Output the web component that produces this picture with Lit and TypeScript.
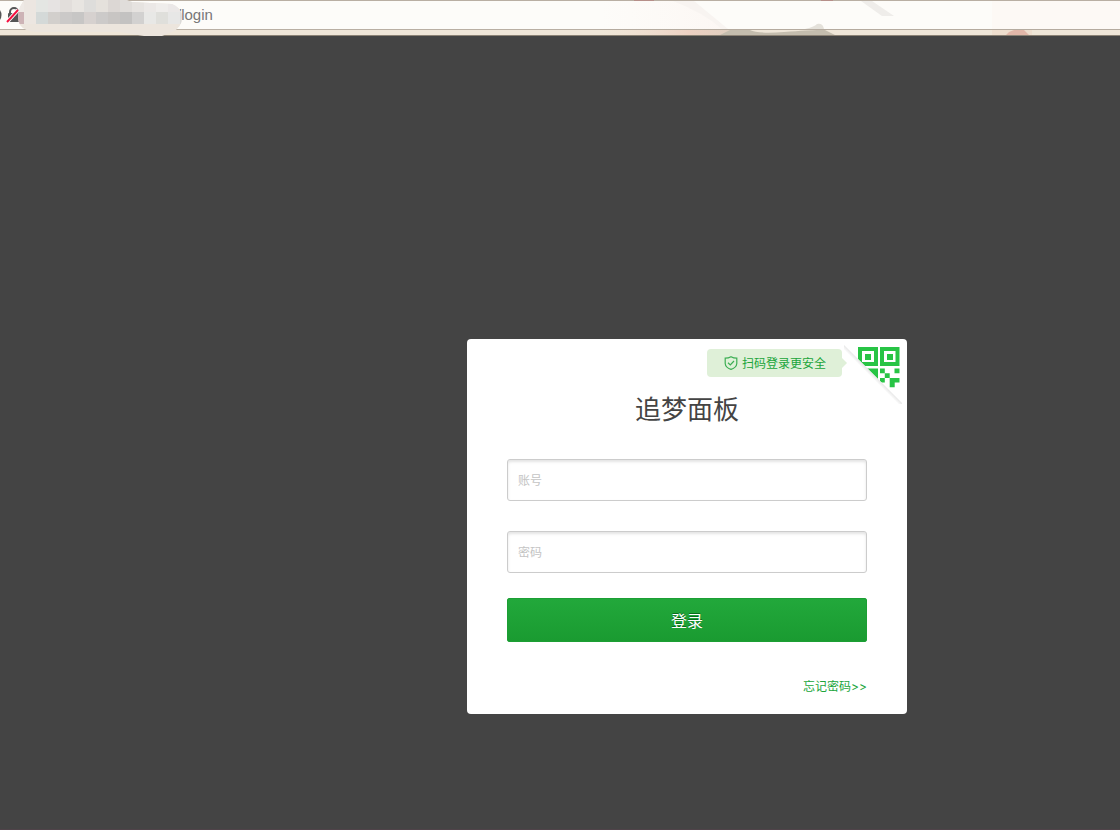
import { LitElement, html, css, svg } from "lit";
import { customElement } from "lit/decorators.js";

const mosaicRows = [
  ["#eee9e5", "#ece6e1", "#e4e6e3", "#e6e3e2", "#e2dedb", "#e8e5e1", "#dedddb", "#e5e1dc", "#dcd7d4", "#e0ddda", "#e6e3e0", "#ebe8e6", "#efedeb", "#ebe8e7", "#eeebea"],
  ["#cdb3b6", "#ece6e1", "#d4d9d8", "#d2cfcc", "#cbc9c8", "#c7c6c5", "#d6d1cf", "#cccac9", "#c8c5c3", "#c3c2c1", "#d2d1d0", "#e8e8e6", "#dfdfdb", "#e7e7e6", "#dcdcda"],
];

@customElement("browser-bar")
export class BrowserBar extends LitElement {
  static styles = css`
    :host {
      display: block;
      position: relative;
      background: #efe6d8;
      border-bottom: 1px solid #8b8275;
      height: 35px;
    }
    .address {
      display: block;
      box-sizing: border-box;
      width: 100%;
      height: 30px;
      margin: 0;
      padding: 0 8px 2px 177px;
      border: 0 solid #b9afa3;
      border-width: 1px 0;
      border-radius: 0;
      outline: 0;
      background: #fdfcf9;
      color: #777;
      font: 15px/26px "Liberation Sans", sans-serif;
    }
    .left,
    .right {
      position: absolute;
      top: 0;
      pointer-events: none;
    }
    .left {
      left: 0;
    }
    .right {
      left: 600px;
      max-width: calc(100% - 600px);
    }
  `;

  render() {
    return html`
      <input class="address" aria-label="Address" value="/login" />
      <svg class="right" width="520" height="35" aria-hidden="true">
        <defs>
          <linearGradient id="blush">
            <stop offset="0" stop-color="#f1dfd0" stop-opacity="0" />
            <stop offset=".6" stop-color="#ecd0c2" />
            <stop offset="1" stop-color="#d8cdbd" />
          </linearGradient>
          <linearGradient id="tint">
            <stop offset="0" stop-color="#fdf8f5" stop-opacity="0" />
            <stop offset="1" stop-color="#fcf7f4" />
          </linearGradient>
        </defs>
        <path d="M0 1H80L125 29H0Z" fill="url(#tint)" />
        <path d="M73 1h21l34 28h-6Q104 13 73 1Z" fill="#f8f4f1" />
        <path d="M261 1h11l22 15h-12Z" fill="#efedea" />
        <path d="M392 1H520V29H392Z" fill="#fcf8f4" opacity=".8" />
        <path d="M0 30H150V35H0Z" fill="url(#blush)" />
        <path d="M150 30q8 4 34 2t33-2h8l10 5H120l10-5Z" fill="#c4bdae" />
        <path d="M205 29q9-2 12-5 6-1 7 5Z" fill="#e4e1da" />
        <path d="M392 30h40v5h-40Z" fill="#ecd8c8" opacity=".6" />
        <path d="M406 35l3-3 5-2h10l5 5Z" fill="#e2b7a9" />
        <path d="M0 29.5H520" stroke="#b4aa9d" stroke-opacity=".8" />
        <path d="M34 .5h20M221 .5h12" stroke="#b68f89" />
      </svg>
      <svg class="left" width="190" height="36" aria-hidden="true">
        <defs>
          <clipPath id="smear">
            <path d="M24 0H126L132 2 150 3 172 4Q182 8 182 17 182 28 172 32L162 36H144L120 32H36Q24 31 20 25 16 17 20 7Z" />
          </clipPath>
        </defs>
        <path d="M0 10q3 5 0 10Z" fill="#555" />
        <path d="M10 14v-2a4 4 0 0 1 8 0v2" fill="none" stroke="#555" stroke-width="2" />
        <rect x="8" y="13" width="12" height="9" rx="1" fill="#555" />
        <path d="M7 22L18 10" stroke="#fff" stroke-width="4" />
        <path d="M7 22L18 10" stroke="#f5103f" stroke-width="2" />
        <g clip-path="url(#smear)">
          <rect width="190" height="36" fill="#ece5dd" />
          ${mosaicRows.map((row, r) =>
            row.map(
              (fill, c) =>
                svg`<rect x=${12 + c * 12} y=${r * 12} width="12" height="12" fill=${fill} />`
            )
          )}
        </g>
      </svg>
    `;
  }
}

@customElement("login-card")
export class LoginCard extends LitElement {
  static styles = css`
    :host {
      display: block;
      position: relative;
      box-sizing: border-box;
      width: 440px;
      max-width: 100%;
      padding: 50px 40px 16px;
      border-radius: 4px;
      background: #fff;
      font-family: "Noto Sans CJK SC", sans-serif;
    }
    .title {
      margin: 0 0 32px;
      color: #444;
      font-size: 26px;
      font-weight: 400;
      line-height: 38px;
      text-align: center;
    }
    .field {
      display: block;
      box-sizing: border-box;
      width: 100%;
      height: 42px;
      margin: 0 0 30px;
      padding: 0 10px 2px;
      border: 1px solid #ccc;
      border-radius: 3px;
      outline: 0;
      background: #fff;
      box-shadow: inset 0 2px 3px #0000001c;
      color: #444;
      font: 12px/38px "Noto Sans CJK SC", sans-serif;
    }
    .field.last {
      margin-bottom: 25px;
    }
    .field::placeholder {
      color: #c4c4c4;
      opacity: 1;
    }
    .submit {
      display: block;
      width: 100%;
      height: 44px;
      margin: 0 0 34px;
      padding: 0;
      border: 1px solid #1c9f34;
      border-radius: 2px;
      background: linear-gradient(#22a83b, #1a9b31);
      color: #fff;
      font: 16px/42px "Noto Sans CJK SC", sans-serif;
      text-shadow: 0 -1px 0 #0a6b1c;
      cursor: pointer;
    }
    .links {
      display: flex;
      justify-content: flex-end;
    }
    .forgot {
      color: #20a53a;
      font-family: Inter, "Noto Sans CJK SC", sans-serif;
      font-size: 12px;
      line-height: 22px;
      text-decoration: none;
    }
    .hint {
      position: absolute;
      z-index: 1;
      top: 10px;
      right: 65px;
      display: flex;
      align-items: center;
      gap: 4px;
      height: 28px;
      padding: 0 16px 0 17px;
      border-radius: 4px;
      background: #dff0d8;
      color: #20a53a;
      font-size: 12px;
      line-height: 28px;
    }
    .hint::after {
      content: "";
      position: absolute;
      left: 100%;
      top: 9px;
      border: 5px solid transparent;
      border-left-color: #dff0d8;
      border-right-width: 0;
    }
    .scan {
      position: absolute;
      top: 5px;
      right: 5px;
      padding: 0;
      border: 0;
      background: none;
      cursor: pointer;
    }
    .scan svg {
      display: block;
    }
  `;

  render() {
    return html`
      <h1 class="title">追梦面板</h1>
      <form @submit=${(e: Event) => e.preventDefault()}>
        <input class="field" type="text" name="username" placeholder="账号" aria-label="账号" />
        <input class="field last" type="password" name="password" placeholder="密码" aria-label="密码" />
        <button class="submit" type="submit">登录</button>
      </form>
      <div class="links"><a class="forgot" href="#forgot">忘记密码&gt;&gt;</a></div>
      <div class="hint">
        <svg width="14" height="14" viewBox="0 0 14 14" fill="none" stroke="#3cae53" stroke-width="1.200" aria-hidden="true">
          <path d="M7 .7Q9.500 2.200 12.800 2.200V7.500Q12.500 11.500 7 13.400 1.500 11.500 1.200 7.500V2.200Q4.500 2.200 7 .7Z" />
          <path d="M4 6.800L6.300 9 10 5" />
        </svg>
        <span>扫码登录更安全</span>
      </div>
      <button class="scan" type="button" aria-label="扫码登录">
        <svg width="58" height="60" viewBox="0 0 58 60" aria-hidden="true">
          <defs>
            <linearGradient id="fold" gradientUnits="userSpaceOnUse" x1="30" y1="30" x2="27" y2="33">
              <stop stop-color="#e2e2e2" />
              <stop offset="1" stop-color="#fff" />
            </linearGradient>
          </defs>
          <g fill="#28c445">
            <path fill-rule="evenodd" d="M14 3h20v19H14ZM18 7v11h12V7ZM21 10h6v6h-6Z" />
            <path fill-rule="evenodd" d="M36 3h19.500v19H36ZM40 7v11h11.500V7ZM43 10h6v6h-6Z" />
            <path d="M14 24.500h20v19H14Z" />
            <path d="M36 24.500h4.800v4.700H36ZM50.500 24.500h5v4.700h-5ZM40.800 29.200h4.900v4.700h-4.900ZM36 33.900h4.800v4.700H36ZM45.700 33.900h9.800v4.700h-4.800v4.700h-5Z" />
          </g>
          <path d="M0 1L58 59V60H0Z" fill="#fff" />
          <path d="M0 1L58 59V60H53L0 7Z" fill="url(#fold)" />
        </svg>
      </button>
    `;
  }
}

@customElement("app-root")
export class AppRoot extends LitElement {
  static styles = css`
    :host {
      display: flex;
      flex-direction: column;
      box-sizing: border-box;
      min-height: 100vh;
      border-bottom: 1px solid #4f4349;
      background: #444;
    }
    .page {
      flex: 1;
      display: flex;
      justify-content: center;
      align-items: flex-start;
      padding: 303px 0 40px 254px;
    }
  `;

  render() {
    return html`
      <browser-bar></browser-bar>
      <main class="page"><login-card></login-card></main>
    `;
  }
}
